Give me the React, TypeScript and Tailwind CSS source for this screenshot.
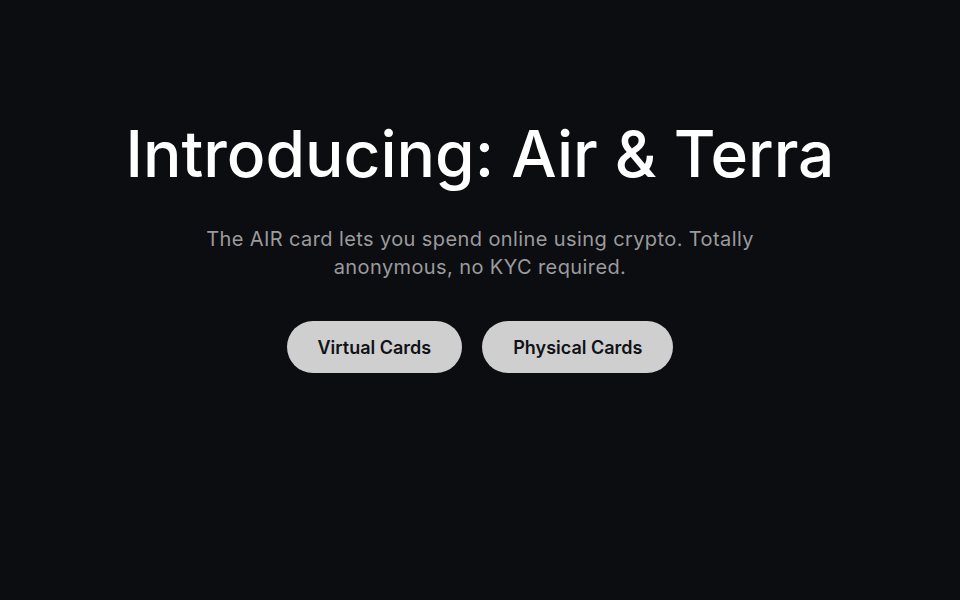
import React from 'react';

export default function App() {
  return (
    <main className="min-h-screen w-full bg-[#0c0d11] font-['Inter',sans-serif]">
      <section className="flex flex-col items-center px-6 pt-[118px] text-center">
        <h1 className="text-[64px] font-medium leading-[72px] text-white">
          Introducing: Air &amp; Terra
        </h1>
        <p className="mt-[35px] max-w-[580px] text-[20px] leading-[28px] tracking-[0.4px] text-[#9b9b9d]">
          The AIR card lets you spend online using crypto. Totally anonymous, no KYC required.
        </p>
        <div className="mt-[40px] flex gap-5">
          <button className="h-[52px] rounded-full bg-[#cfcfd0] px-[31px] text-[18px] font-semibold text-[#111214]">
            Virtual Cards
          </button>
          <button className="h-[52px] rounded-full bg-[#cfcfd0] px-[31px] text-[18px] font-semibold text-[#111214]">
            Physical Cards
          </button>
        </div>
      </section>
    </main>
  );
}
